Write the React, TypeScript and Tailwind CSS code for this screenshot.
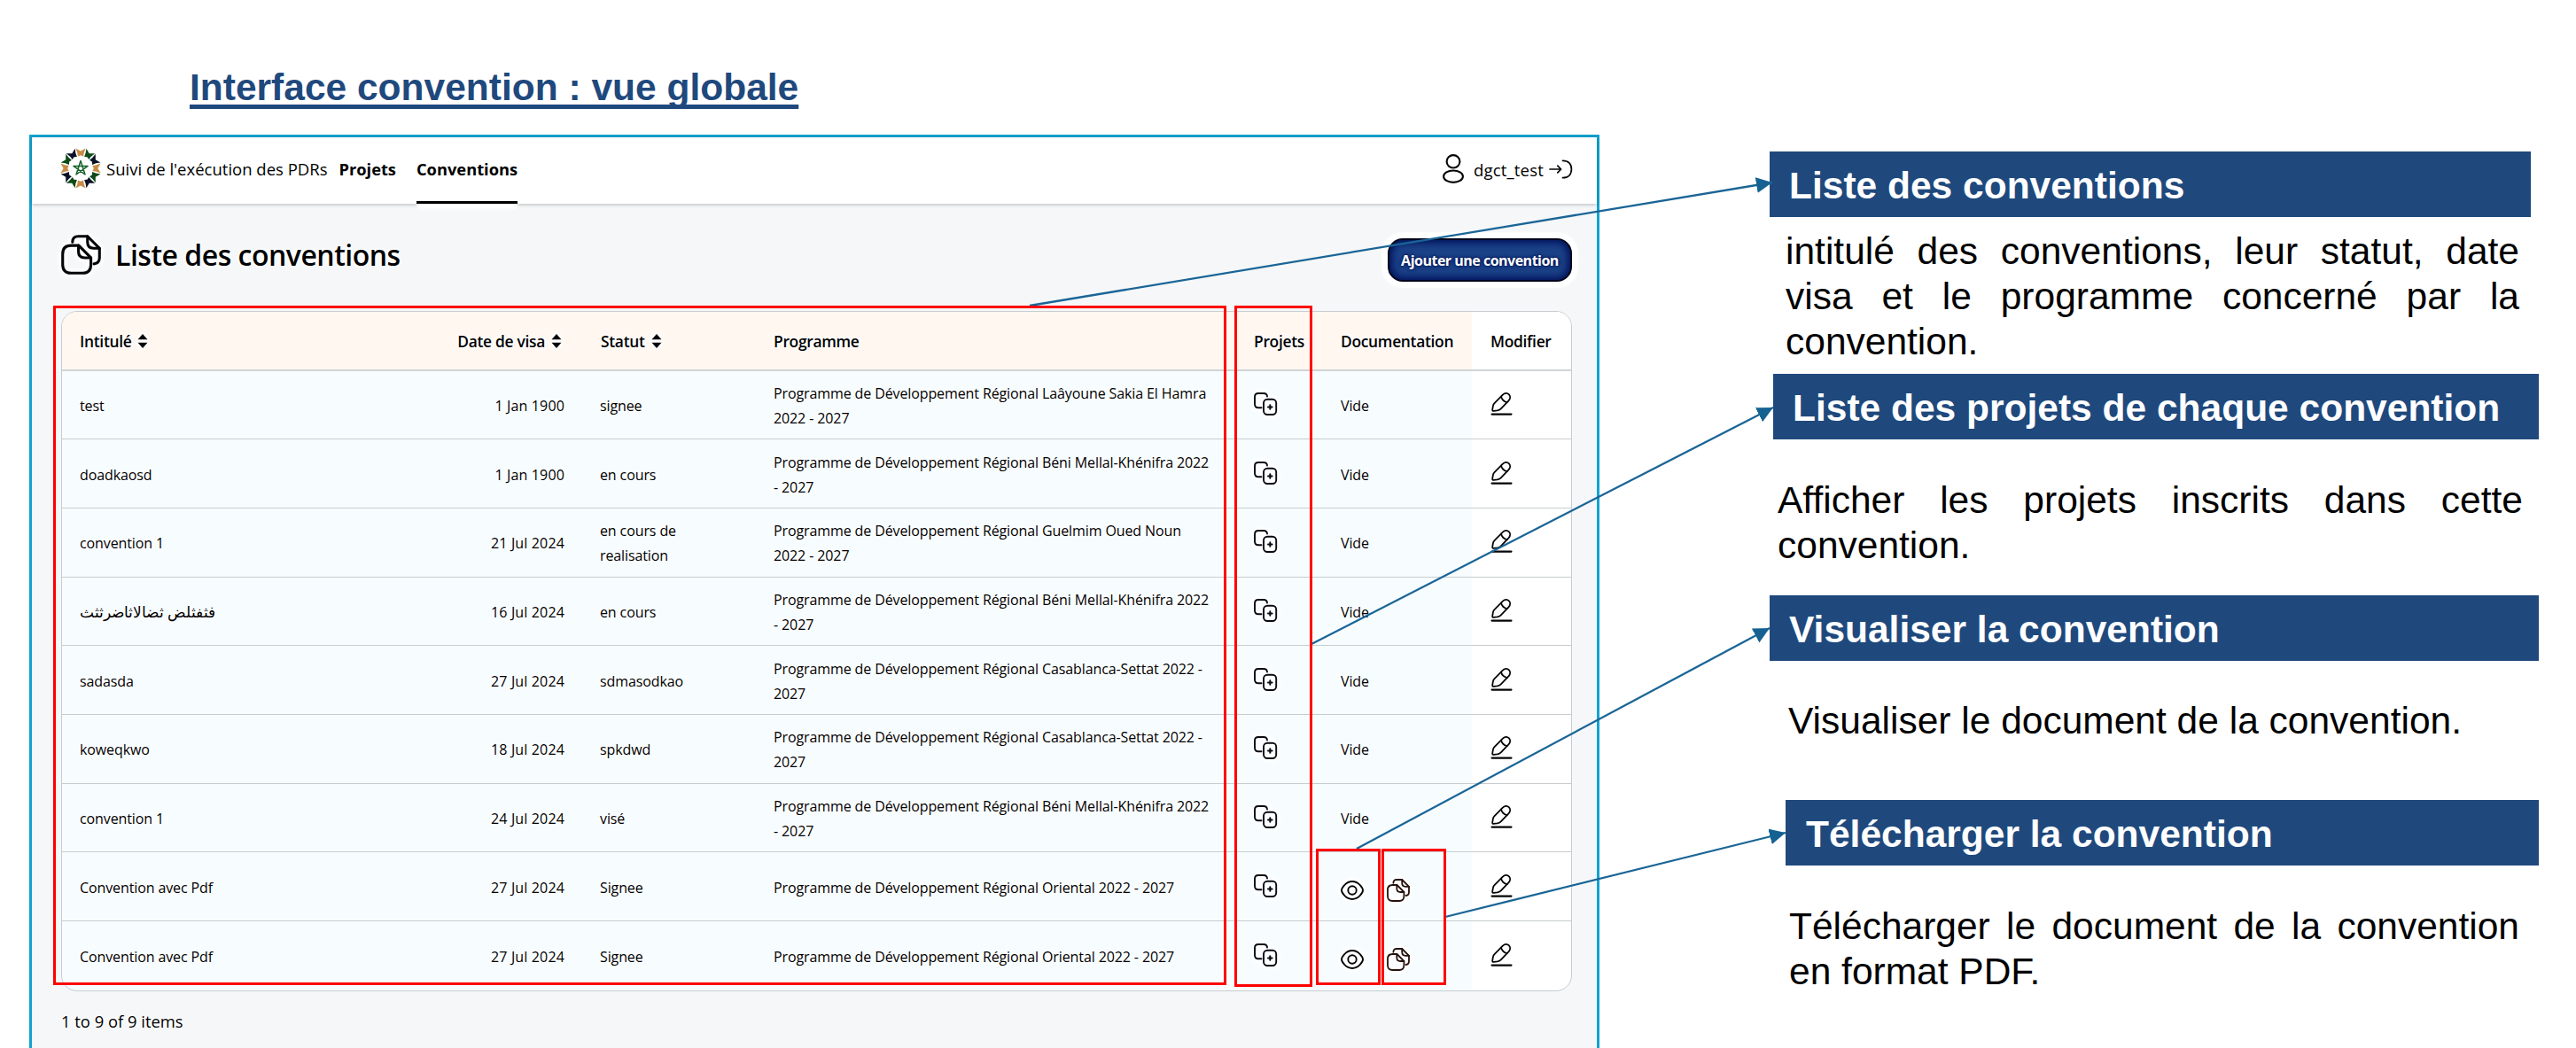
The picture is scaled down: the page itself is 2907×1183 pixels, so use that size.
import React from 'react';

const HALO =
  '[text-shadow:0_0_2px_#fff,0_0_3px_#fff,0_0_4px_#fff,0_0_5px_#fff,0_0_6px_#fff]';
const GLOW = '[filter:drop-shadow(0_0_2px_#fff)_drop-shadow(0_0_2px_#fff)_drop-shadow(0_0_2px_#fff)]';

function CopyPlusIcon() {
  return (
    <svg width="26" height="26" viewBox="0 0 26 26" fill="none" stroke="#0a0a12" strokeWidth="1.9" strokeLinecap="round" className={`block overflow-visible ${GLOW}`}>
      <path d="M8.5 17.3H5Q1 17.3 1 13.3V5Q1 1 5 1H11Q15 1 15 4.6" />
      <rect x="11" y="7.8" width="14.2" height="17.2" rx="4.2" />
      <path d="M18.3 14.2v4.6M16 16.5h4.6" strokeWidth="2" />
    </svg>
  );
}

function DocsIcon({ size, color = '#050508' }: { size: number; color?: string }) {
  return (
    <svg width={size} height={size} viewBox="0 0 26 26" fill="none" stroke={color} strokeWidth="1.8" strokeLinecap="round" strokeLinejoin="round" className={`block overflow-visible ${GLOW}`}>
      <path d="M1 12.5Q1 7 6.5 7H11.5L19.4 15V19.5Q19.4 25 14 25H6.5Q1 25 1 19.5Z" />
      <path d="M11.3 7V11Q11.3 15 15.3 15H19.4" />
      <path d="M7.4 4.8Q7.4 1 11.2 1H17.2L25 8.8V15Q25 18.6 21.4 19" />
      <path d="M17.2 1V4.8Q17.2 8.8 21.2 8.8H25" />
    </svg>
  );
}

function EyeIcon() {
  return (
    <svg width="26" height="22" viewBox="0 0 26 22" fill="none" stroke="#050508" strokeWidth="1.9" className={`block overflow-visible ${GLOW}`}>
      <path d="M1 11C1 8.5 5.6 1 13 1S25 8.5 25 11 20.4 21 13 21 1 13.5 1 11Z" />
      <circle cx="13" cy="11" r="4.7" />
    </svg>
  );
}

function EditIcon() {
  return (
    <svg width="23" height="26" viewBox="0 0 23 26" fill="none" stroke="#050508" strokeWidth="1.8" strokeLinecap="round" strokeLinejoin="round" className="block overflow-visible">
      <path d="M12.6 2.9C14.8 .6 17.8 .3 19.7 2.2S21.6 7 19.6 9.2L10.8 18.3Q9.1 20 6.6 20.4L2.6 20.9Q1 21 1.2 19.5L1.8 15.6Q2.1 13.6 3.5 12.2Z" />
      <path d="M11 4.7Q12.2 9.5 17.6 11.2" />
      <path d="M.5 24.6H22.5" strokeWidth="2.1" />
    </svg>
  );
}

function UserIcon() {
  return (
    <svg width="24" height="33" viewBox="0 0 24 33" fill="none" stroke="#050508" strokeWidth="2.1" className="block">
      <ellipse cx="12" cy="8.3" rx="7.4" ry="7.2" />
      <ellipse cx="12" cy="25.2" rx="10.9" ry="6.7" />
    </svg>
  );
}

function LogoutIcon() {
  return (
    <svg width="27" height="22" viewBox="0 0 27 22" fill="none" stroke="#050508" strokeWidth="1.7" strokeLinecap="round" strokeLinejoin="round" className="block">
      <path d="M1 11H13.5M9.8 7.2L13.6 11L9.8 14.8" />
      <path d="M15.5 1.3C21.8 1.3 25.4 5 25.4 11S21.8 20.7 15.5 20.7" />
    </svg>
  );
}

const PETALS = ['#c98b45', '#0d4a17', '#0b1226'];

function Logo() {
  return (
    <svg width="46" height="46" viewBox="-23 -23 46 46" className="block">
      {Array.from({ length: 12 }, (_, i) => (
        <path key={i} d="M-3 -13.4Q-3.2 -17.500 -5.6 -22.600L0 -19.4L5.6 -22.600Q3.2 -17.500 3 -13.4L0 -14.8Z" fill={PETALS[i % 3]} transform={`rotate(${i * 30})`} />
      ))}
      <path d="M0 -8.5L5 7L-8.1 -2.6H8.1L-5 7Z" fill="none" stroke="#14632a" strokeWidth="1.5" strokeLinejoin="round" />
    </svg>
  );
}

function SortIcon() {
  return (
    <svg width="12" height="16" viewBox="0 0 12 16" fill="#050508" className={`block overflow-visible ${GLOW}`}>
      <path d="M6 0L11.5 6.2H.5ZM6 16L.5 9.8H11.5Z" />
    </svg>
  );
}

type Row = { title: string; date: string; status: string[]; program: string[]; doc?: boolean; arabic?: boolean };

const P = 'Programme de Développement Régional ';
const ROWS: Row[] = [
  { title: 'test', date: '1 Jan 1900', status: ['signee'], program: [P + 'Laâyoune Sakia El Hamra', '2022 - 2027'] },
  { title: 'doadkaosd', date: '1 Jan 1900', status: ['en cours'], program: [P + 'Béni Mellal-Khénifra 2022', '- 2027'] },
  { title: 'convention 1', date: '21 Jul 2024', status: ['en cours de', 'realisation'], program: [P + 'Guelmim Oued Noun', '2022 - 2027'] },
  { title: 'فثفثلض ثضالاثاضرثثث', date: '16 Jul 2024', status: ['en cours'], program: [P + 'Béni Mellal-Khénifra 2022', '- 2027'], arabic: true },
  { title: 'sadasda', date: '27 Jul 2024', status: ['sdmasodkao'], program: [P + 'Casablanca-Settat 2022 -', '2027'] },
  { title: 'koweqkwo', date: '18 Jul 2024', status: ['spkdwd'], program: [P + 'Casablanca-Settat 2022 -', '2027'] },
  { title: 'convention 1', date: '24 Jul 2024', status: ['visé'], program: [P + 'Béni Mellal-Khénifra 2022', '- 2027'] },
  { title: 'Convention avec Pdf', date: '27 Jul 2024', status: ['Signee'], program: [P + 'Oriental 2022 - 2027'], doc: true },
  { title: 'Convention avec Pdf', date: '27 Jul 2024', status: ['Signee'], program: [P + 'Oriental 2022 - 2027'], doc: true },
];

const COLS = 'grid grid-cols-[387px_200px_196px_541px_99px_168px_1fr]';

function Lines({ lines }: { lines: string[] }) {
  return (
    <div className="pt-[2px] pl-[20px]">
      {lines.map((l) => (
        <div key={l} className="whitespace-nowrap">{l}</div>
      ))}
    </div>
  );
}

function Table() {
  return (
    <div className="ml-[33px] w-[1705px] overflow-hidden rounded-[18px] border border-[#c8ccd0] bg-[linear-gradient(to_right,#f7fdff_1591px,#fff_1591px)]">
      <div className={`${COLS} ${HALO} h-[67px] items-center border-b-2 border-[#d0d4d7] bg-[linear-gradient(to_right,#fff7f0_1591px,#fff_1591px)] pt-[2px] text-[17.4px] font-semibold tracking-[-0.3px]`}>
        <div className="flex items-center gap-[7px] pl-[20px]">Intitulé <SortIcon /></div>
        <div className="flex items-center justify-end gap-[7px] pr-[23px]">Date de visa <SortIcon /></div>
        <div className="flex items-center gap-[7px] pl-[21px]">Statut <SortIcon /></div>
        <div className="pl-[20px]">Programme</div>
        <div className="pl-[21px]">Projets</div>
        <div className="pl-[20px]">Documentation</div>
        <div className="pl-[21px]">Modifier</div>
      </div>
      {ROWS.map((r, i) => (
        <div key={i} className={`${COLS} ${HALO} h-[77.7px] items-center border-b-[1.5px] border-[#c8cccf] text-[16px] leading-[28px] tracking-[-0.11px] last:border-b-0`}>
          {r.arabic ? (
            <div className="pt-[2px] pl-[20px] text-[17px] tracking-normal">{r.title}</div>
          ) : (
            <div className="pt-[2px] pl-[20px]">{r.title}</div>
          )}
          <div className="pt-[2px] pr-[20px] text-right tracking-[0.15px]">{r.date}</div>
          <Lines lines={r.status} />
          <Lines lines={r.program} />
          <div className="pb-[2px] pl-[21px]"><CopyPlusIcon /></div>
          {r.doc ? (
            <div className="flex items-center gap-[26px] pt-[9px] pl-[20px]">
              <EyeIcon />
              <DocsIcon size={26} color="#24120c" />
            </div>
          ) : (
            <div className="pt-[2px] pl-[20px]">Vide</div>
          )}
          <div className="pb-[2px] pl-[22px]"><EditIcon /></div>
        </div>
      ))}
    </div>
  );
}

function AppPanel() {
  return (
    <section className="mt-[28px] ml-[33px] h-[1060px] w-[1772px] border-[3px] border-[#12a3cf] bg-[#f5f7f9] font-['Open_Sans','Noto_Sans',sans-serif] text-black">
      <header className="flex h-[75px] items-stretch bg-white pr-[27px] pl-[32px] text-[18.5px] shadow-[0_1px_4px_rgba(0,0,0,0.25)]">
        <div className="flex items-center pb-[5px]">
          <Logo />
          <span className="pt-[2px] pl-[6px] whitespace-nowrap">Suivi de l'exécution des PDRs</span>
        </div>
        <nav className="flex text-[18.3px] font-bold">
          <span className="ml-[13px] flex items-center pb-[3px]">Projets</span>
          <span className="ml-[23px] flex items-center border-b-[3px] border-black shadow-[0_7px_4px_-1px_#fff]">Conventions</span>
        </nav>
        <div className="ml-auto flex items-center pb-[4px]">
          <UserIcon />
          <span className="pt-[2px] pl-[11px] tracking-[0.2px]">dgct_test</span>
          <span className="pl-[6px]"><LogoutIcon /></span>
        </div>
      </header>
      <div className="flex h-[120.5px] items-start pr-[28px] pl-[33px]">
        <div className="pt-[35px]"><DocsIcon size={45} /></div>
        <h2 className={`pt-[36px] pl-[16px] text-[32px] leading-[44px] font-semibold tracking-[-0.5px] ${HALO}`}>Liste des conventions</h2>
        <button className="mt-[39px] ml-auto flex h-[49px] w-[208px] items-center justify-center rounded-[17px] border-2 border-[#02051c] bg-[#1b4288] text-[16px] font-bold tracking-[-0.5px] text-white shadow-[inset_0_0_9px_3px_#00105a,0_0_2px_7px_#fff] [text-shadow:0_0_3px_#001050,0_0_5px_#001050]">
          Ajouter une convention
        </button>
      </div>
      <Table />
      <p className={`mt-[21px] ml-[33px] text-[18.4px] leading-[26px] ${HALO}`}>1 to 9 of 9 items</p>
    </section>
  );
}

function Banner({ className, children }: { className: string; children: React.ReactNode }) {
  return (
    <h3 className={`flex h-[74px] items-center bg-[#1f497d] pt-[2px] text-[42.5px] font-bold whitespace-nowrap text-white ${className}`}>{children}</h3>
  );
}

function Notes() {
  return (
    <aside className="w-[1102px] pt-[171px] text-[42.5px] leading-[51px] text-black">
      <Banner className="ml-[192px] w-[859px] pl-[22px]">Liste des conventions</Banner>
      <p className="mt-[12.5px] ml-[210px] w-[828px] text-justify">
        intitulé des conventions, leur statut, date visa et le programme concerné par la convention.
      </p>
      <Banner className="mt-[11.5px] ml-[196px] w-[864px] pl-[22px]">Liste des projets de chaque convention</Banner>
      <p className="mt-[42.5px] ml-[201px] w-[841px] text-justify">Afficher les projets inscrits dans cette convention.</p>
      <Banner className="mt-[31.5px] ml-[192px] w-[868px] pl-[22px]">Visualiser la convention</Banner>
      <p className="mt-[41.5px] ml-[213px] w-[841px]">Visualiser le document de la convention.</p>
      <Banner className="mt-[64.5px] ml-[210px] w-[850px] pl-[23px]">Télécharger la convention</Banner>
      <p className="mt-[42.5px] ml-[214px] w-[824px] text-justify">Télécharger le document de la convention en format PDF.</p>
    </aside>
  );
}

const LINKS = [
  [1162, 345, 2000, 206],
  [1480, 727, 2001, 460],
  [1531, 958, 1997, 709],
  [1631, 1035, 2015, 940],
];

function Annotations() {
  return (
    <div className="pointer-events-none absolute inset-0">
      <svg width="2907" height="1183" className="absolute inset-0">
        <defs>
          <marker id="tip" viewBox="0 0 18 18" refX="18" refY="9" markerWidth="18" markerHeight="18" markerUnits="userSpaceOnUse" orient="auto">
            <path d="M0 0L18 9L0 18Z" fill="#156292" />
          </marker>
        </defs>
        {LINKS.map(([x1, y1, x2, y2]) => (
          <line key={y1} x1={x1} y1={y1} x2={x2} y2={y2} stroke="#1a6596" strokeWidth="2.3" markerEnd="url(#tip)" />
        ))}
      </svg>
      <div className="absolute top-[345px] left-[60px] h-[767px] w-[1324px] border-[3px] border-[#ff0000]" />
      <div className="absolute top-[345px] left-[1393px] h-[769px] w-[88px] border-[3px] border-[#ff0000]" />
      <div className="absolute top-[958px] left-[1485px] h-[154px] w-[73px] border-[3px] border-[#ff0000]" />
      <div className="absolute top-[958px] left-[1559px] h-[154px] w-[73px] border-[3px] border-[#ff0000]" />
    </div>
  );
}

export default function App() {
  return (
    <main className="relative flex h-[1183px] w-[2907px] overflow-hidden bg-white font-['Liberation_Sans',Arial,sans-serif]">
      <div className="w-[1805px] shrink-0 pt-[73px]">
        <h1 className="ml-[214px] text-[42.5px] leading-[51px] font-bold whitespace-nowrap text-[#1f497d] underline decoration-[5px] underline-offset-[5px] [text-decoration-skip-ink:none]">
          Interface convention : vue globale
        </h1>
        <AppPanel />
      </div>
      <Notes />
      <Annotations />
    </main>
  );
}
